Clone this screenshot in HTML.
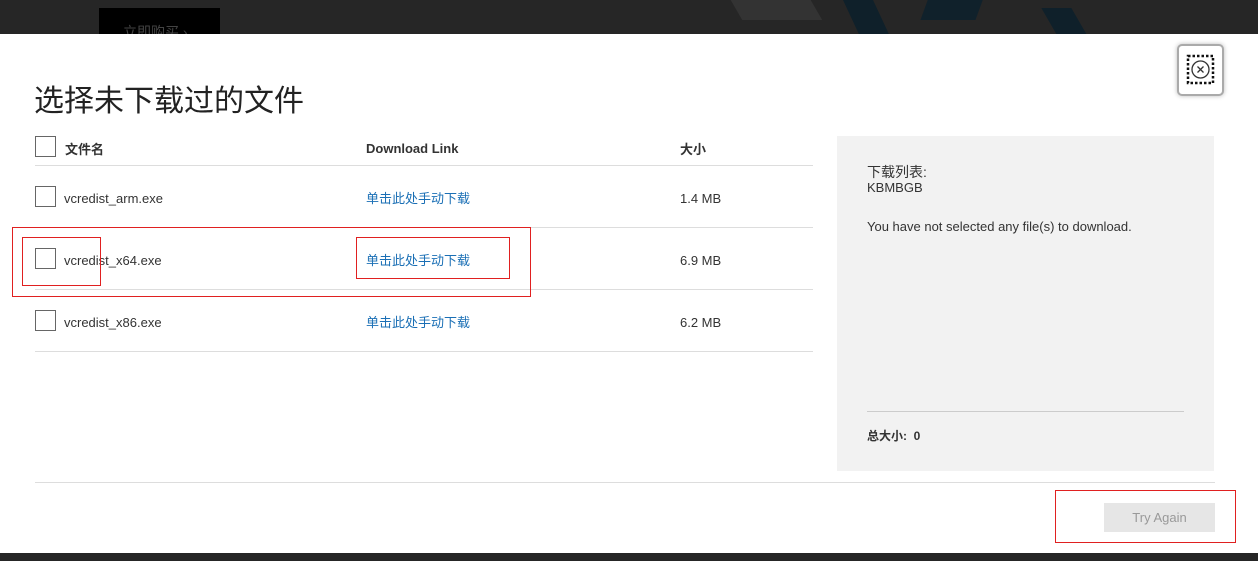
<!DOCTYPE html>
<html><head><meta charset="utf-8"><style>
*{margin:0;padding:0;box-sizing:border-box}
body{width:1258px;height:561px;overflow:hidden;background:#fff;font-family:"Liberation Sans","Noto Sans CJK SC",sans-serif;position:relative;color:#333}
.top{position:absolute;left:0;top:0;width:1258px;height:34px;background:#262626;overflow:hidden}
.buy{position:absolute;left:99px;top:8px;width:121px;height:30px;background:#000;color:#444;font-size:14px;padding:14px 0 0 24px}
.bot{position:absolute;left:0;top:553px;width:1258px;height:8px;background:#262626}
.abs{position:absolute}
h1{position:absolute;left:34px;top:76px;font-size:30px;font-weight:400;color:#222}
.cb{position:absolute;width:21px;height:21px;border:1px solid #666;background:#fff}
.t{position:absolute;font-size:14px;color:#333}
.l{position:absolute;font-size:13px;color:#1a6fb5}
.hr{position:absolute;height:1px;background:#ddd}
.red{position:absolute;border:1px solid #e02020}
</style></head><body>
<div class="top">
<div class="buy">立即购买 ›</div>
<div class="abs" style="left:735px;top:-5px;width:80px;height:25px;background:#333;transform:skewX(30deg)"></div>
<div class="abs" style="left:850px;top:-5px;width:30px;height:40px;background:#0f202a;transform:skewX(25deg)"></div>
<div class="abs" style="left:925px;top:-5px;width:55px;height:25px;background:#10212b;transform:skewX(-20deg)"></div>
<div class="abs" style="left:1050px;top:8px;width:30px;height:30px;background:#0f202a;transform:skewX(30deg)"></div>
</div>
<h1>选择未下载过的文件</h1>
<div class="abs" style="left:1177px;top:44px;width:47px;height:52px;border:2px solid #aaa;border-radius:5px;background:#fff;box-shadow:0 0 5px #bbb">
<svg width="43" height="48" viewBox="0 0 43 48"><rect x="9" y="10" width="25" height="27" fill="none" stroke="#111" stroke-width="2.5" stroke-dasharray="2.5 2"/><circle cx="21.5" cy="23.5" r="8.5" fill="none" stroke="#333" stroke-width="1.3"/><path d="M18.5 20.5l6 6M24.5 20.5l-6 6" stroke="#333" stroke-width="1.3"/></svg>
</div>
<div class="cb" style="left:35px;top:136px"></div>
<div class="t" style="left:65px;top:140px;font-weight:bold;font-size:13px;top:139px">文件名</div>
<div class="t" style="left:366px;top:141px;font-weight:bold;font-size:13px">Download Link</div>
<div class="t" style="left:680px;top:139px;font-weight:bold;font-size:13px">大小</div>
<div class="hr" style="left:35px;top:165px;width:778px"></div>
<div class="cb" style="left:35px;top:186px"></div><div class="t" style="left:64px;top:191px;font-size:13px">vcredist_arm.exe</div><div class="l" style="left:366px;top:188px">单击此处手动下载</div><div class="t" style="left:680px;top:191px;font-size:13px">1.4 MB</div>
<div class="hr" style="left:35px;top:227px;width:778px"></div>
<div class="cb" style="left:35px;top:248px"></div><div class="t" style="left:64px;top:253px;font-size:13px">vcredist_x64.exe</div><div class="l" style="left:366px;top:250px">单击此处手动下载</div><div class="t" style="left:680px;top:253px;font-size:13px">6.9 MB</div>
<div class="hr" style="left:35px;top:289px;width:778px"></div>
<div class="cb" style="left:35px;top:310px"></div><div class="t" style="left:64px;top:315px;font-size:13px">vcredist_x86.exe</div><div class="l" style="left:366px;top:312px">单击此处手动下载</div><div class="t" style="left:680px;top:315px;font-size:13px">6.2 MB</div>
<div class="hr" style="left:35px;top:351px;width:778px"></div>
<div class="abs" style="left:837px;top:136px;width:377px;height:335px;background:#f2f2f2">
<div class="t" style="left:30px;top:29px;font-size:14px;line-height:15px">下载列表:<br><span style="font-size:13px">KBMBGB</span></div>
<div class="t" style="left:30px;top:83px;font-size:13px">You have not selected any file(s) to download.</div>
<div class="hr" style="left:30px;top:275px;width:317px;background:#ccc"></div>
<div class="t" style="left:30px;top:291px;font-size:12px;font-weight:bold">总大小:&nbsp; 0</div>
</div>
<div class="hr" style="left:35px;top:482px;width:1180px"></div>
<div class="abs" style="left:1104px;top:503px;width:111px;height:29px;background:#e6e6e6;color:#999;font-size:13px;text-align:center;line-height:30px">Try Again</div>
<div class="red" style="left:12px;top:227px;width:519px;height:70px"></div>
<div class="red" style="left:22px;top:237px;width:79px;height:49px"></div>
<div class="red" style="left:356px;top:237px;width:154px;height:42px"></div>
<div class="red" style="left:1055px;top:490px;width:181px;height:53px"></div>
<div class="bot"></div>
</body></html>
